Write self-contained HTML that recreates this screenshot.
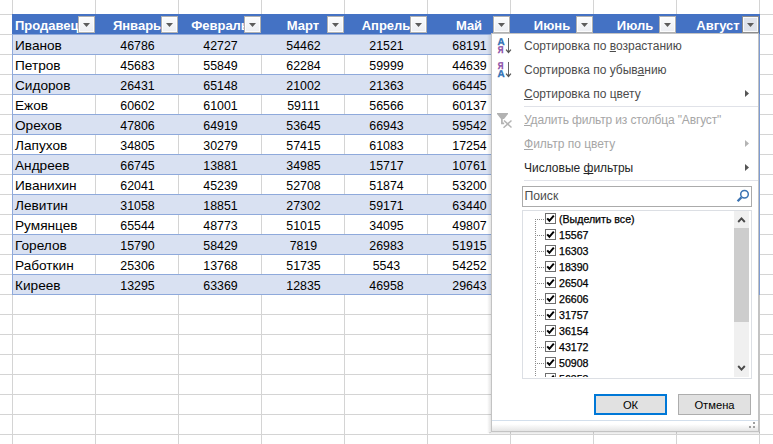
<!DOCTYPE html>
<html lang="ru"><head><meta charset="utf-8"><title>Фильтр</title>
<style>
html,body{margin:0;padding:0;background:#fff;}
body{width:773px;height:444px;overflow:hidden;font-family:"Liberation Sans",sans-serif;}
#sheet{position:relative;width:773px;height:444px;overflow:hidden;background:#fff;}
.vg{position:absolute;top:0;width:1px;height:444px;background:#d4d4d4;}
.hg{position:absolute;left:0;height:1px;width:773px;background:#d4d4d4;}
#tbl{position:absolute;left:12px;top:14px;width:748px;height:281px;font-size:13.3px;color:#000;}
.hdr{position:absolute;left:0;top:0;width:748px;height:21px;background:#4472c4;}
.hc{position:absolute;top:0;width:84px;height:21px;overflow:hidden;color:#fff;font-weight:bold;font-size:13px;text-align:center;white-space:nowrap;}
.hc span{position:absolute;left:-40px;right:-40px;top:0;line-height:24px;text-align:center;}
.hc.left span{left:3px;right:auto;text-align:left;}
.fb{position:absolute;left:66px;top:2px;width:15px;height:15px;border:1px solid #b1b1b1;background:linear-gradient(#fbfcfd,#eceef3);box-sizing:content-box;box-shadow:inset 0 0 0 1px rgba(255,255,255,.8);}
.fb svg{position:absolute;left:4px;top:6px;}
.fb.act{background:#dfe3eb;border-color:#8c8c8c;}
.row{position:absolute;left:0;width:748px;height:21px;box-sizing:border-box;border-top:1px solid #8ea9db;border-left:1px solid #8ea9db;border-right:1px solid #8ea9db;}
.row.band{background:#d9e1f2;}
.row:last-child{border-bottom:1px solid #8ea9db;}
.c{position:absolute;top:0;width:85px;height:20px;line-height:21px;font-size:13.15px;text-align:center;white-space:nowrap;margin-left:-1px;}
.c.num{transform:scaleX(0.94);transform-origin:50% 50%;}
.c.left{text-align:left;padding-left:3px;box-sizing:border-box;font-size:13.65px;}
/* popup */
#pop{position:absolute;left:491px;top:33px;width:266px;height:397px;border:1px solid #c3c3c3;background:#fff;font-size:12px;color:#4c4c4c;}
.mi{position:absolute;left:32px;white-space:nowrap;line-height:14px;margin-top:-1px;}
.mi.dis{color:#a6a6a6;}
.mi u{text-decoration:underline;text-underline-offset:1px;text-decoration-skip-ink:none;}
.sep{position:absolute;left:32px;right:0;height:1px;background:#e0e2e8;}
.arr{position:absolute;left:253px;width:4px;height:7px;background:#555;clip-path:polygon(0 0,100% 50%,0 100%);}
.arr.dis{background:#b4b4b4;}
#search{position:absolute;left:30px;top:152px;width:228px;height:19px;border:1px solid #ababab;background:#fff;}
#search span{position:absolute;left:1.5px;top:2px;line-height:14px;color:#4d4d4d;font-size:12.2px;}
#list{position:absolute;left:30px;top:176px;width:228px;height:167px;border:1px solid #dcdfe4;background:#fff;overflow:hidden;color:#000;}
.li{position:absolute;left:0;height:16px;width:210px;}
.li .cb{position:absolute;left:22px;top:2px;width:9px;height:9px;border:1px solid #6e6e6e;background:#fff;}
.li .cb svg{position:absolute;left:-1px;top:-1px;}
.li span{position:absolute;left:36px;top:1px;line-height:14px;white-space:nowrap;font-size:10.6px;}
#sb{position:absolute;left:211px;top:0;width:15px;height:166px;background:#f0f0f0;}
#thumb{position:absolute;left:0;top:17px;width:15px;height:94px;background:#cdcdcd;}
.btn{position:absolute;top:360px;width:71px;height:19px;border:1px solid #adadad;background:#e1e1e1;color:#000;text-align:center;line-height:21px;font-size:11.2px;}
.btn.def{border:2px solid #0078d7;width:69px;height:17px;line-height:19px;}
#grip{position:absolute;left:0;right:0;top:386px;height:10px;border-top:1px solid #d3dfec;background:linear-gradient(#fff 0,#fff 30%,#e5e5e5 100%);}

.tv{position:absolute;left:12px;top:8px;width:1px;height:158px;background:repeating-linear-gradient(to bottom,#8a8a8a 0,#8a8a8a 1px,transparent 1px,transparent 2px);}
.th{position:absolute;left:12px;width:10px;height:1px;background:repeating-linear-gradient(to right,#8a8a8a 0,#8a8a8a 1px,transparent 1px,transparent 2px);}

#rsh{position:absolute;left:759px;top:34px;width:1px;height:399px;background:linear-gradient(#7f9cd1 0,#7f9cd1 261px,#c4c4c4 261px);}
#lsh{position:absolute;left:487px;top:35px;width:4px;height:398px;background:linear-gradient(to left,rgba(0,0,0,.11),rgba(0,0,0,0));}
#bsh{position:absolute;left:489px;top:432px;width:271px;height:2px;background:linear-gradient(rgba(0,0,0,.11),rgba(0,0,0,.04));}

#list:after{content:"";position:absolute;left:0;right:0;bottom:0;height:1px;background:#fff;}
.li span{-webkit-text-stroke:0.25px #000;}

</style></head><body>
<div id="sheet">
<div class="vg" style="left:12px"></div><div class="vg" style="left:95px"></div><div class="vg" style="left:178px"></div><div class="vg" style="left:261px"></div><div class="vg" style="left:344px"></div><div class="vg" style="left:427px"></div><div class="vg" style="left:510px"></div><div class="vg" style="left:593px"></div><div class="vg" style="left:676px"></div><div class="vg" style="left:759px"></div><div class="hg" style="top:14px"></div><div class="hg" style="top:34px"></div><div class="hg" style="top:54px"></div><div class="hg" style="top:74px"></div><div class="hg" style="top:94px"></div><div class="hg" style="top:114px"></div><div class="hg" style="top:134px"></div><div class="hg" style="top:154px"></div><div class="hg" style="top:174px"></div><div class="hg" style="top:194px"></div><div class="hg" style="top:214px"></div><div class="hg" style="top:234px"></div><div class="hg" style="top:254px"></div><div class="hg" style="top:274px"></div><div class="hg" style="top:294px"></div><div class="hg" style="top:314px"></div><div class="hg" style="top:334px"></div><div class="hg" style="top:354px"></div><div class="hg" style="top:374px"></div><div class="hg" style="top:394px"></div><div class="hg" style="top:414px"></div><div class="hg" style="top:434px"></div>
<div id="tbl">
<div class="hdr"><div class="hc left" style="left:0px"><span>Продавец</span><i class="fb"><svg width="7" height="4" viewBox="0 0 7 4"><path d="M0 0H7L3.5 4Z" fill="#5c5c5c"/></svg></i></div><div class="hc" style="left:83px"><span>Январь</span><i class="fb"><svg width="7" height="4" viewBox="0 0 7 4"><path d="M0 0H7L3.5 4Z" fill="#5c5c5c"/></svg></i></div><div class="hc" style="left:166px"><span>Февраль</span><i class="fb"><svg width="7" height="4" viewBox="0 0 7 4"><path d="M0 0H7L3.5 4Z" fill="#5c5c5c"/></svg></i></div><div class="hc" style="left:249px"><span>Март</span><i class="fb"><svg width="7" height="4" viewBox="0 0 7 4"><path d="M0 0H7L3.5 4Z" fill="#5c5c5c"/></svg></i></div><div class="hc" style="left:332px"><span>Апрель</span><i class="fb"><svg width="7" height="4" viewBox="0 0 7 4"><path d="M0 0H7L3.5 4Z" fill="#5c5c5c"/></svg></i></div><div class="hc" style="left:415px"><span>Май</span><i class="fb"><svg width="7" height="4" viewBox="0 0 7 4"><path d="M0 0H7L3.5 4Z" fill="#5c5c5c"/></svg></i></div><div class="hc" style="left:498px"><span>Июнь</span><i class="fb"><svg width="7" height="4" viewBox="0 0 7 4"><path d="M0 0H7L3.5 4Z" fill="#5c5c5c"/></svg></i></div><div class="hc" style="left:581px"><span>Июль</span><i class="fb"><svg width="7" height="4" viewBox="0 0 7 4"><path d="M0 0H7L3.5 4Z" fill="#5c5c5c"/></svg></i></div><div class="hc" style="left:664px"><span>Август</span><i class="fb act"><svg width="7" height="4" viewBox="0 0 7 4"><path d="M0 0H7L3.5 4Z" fill="#5c5c5c"/></svg></i></div></div>
<div class="row band" style="top:20px"><div class="c left" style="left:0px">Иванов</div><div class="c num" style="left:83px">46786</div><div class="c num" style="left:166px">42727</div><div class="c num" style="left:249px">54462</div><div class="c num" style="left:332px">21521</div><div class="c num" style="left:415px">68191</div></div>
<div class="row" style="top:40px"><div class="c left" style="left:0px">Петров</div><div class="c num" style="left:83px">45683</div><div class="c num" style="left:166px">55849</div><div class="c num" style="left:249px">62284</div><div class="c num" style="left:332px">59999</div><div class="c num" style="left:415px">44639</div></div>
<div class="row band" style="top:60px"><div class="c left" style="left:0px">Сидоров</div><div class="c num" style="left:83px">26431</div><div class="c num" style="left:166px">65148</div><div class="c num" style="left:249px">21002</div><div class="c num" style="left:332px">21363</div><div class="c num" style="left:415px">66445</div></div>
<div class="row" style="top:80px"><div class="c left" style="left:0px">Ежов</div><div class="c num" style="left:83px">60602</div><div class="c num" style="left:166px">61001</div><div class="c num" style="left:249px">59111</div><div class="c num" style="left:332px">56566</div><div class="c num" style="left:415px">60137</div></div>
<div class="row band" style="top:100px"><div class="c left" style="left:0px">Орехов</div><div class="c num" style="left:83px">47806</div><div class="c num" style="left:166px">64919</div><div class="c num" style="left:249px">53645</div><div class="c num" style="left:332px">66943</div><div class="c num" style="left:415px">59542</div></div>
<div class="row" style="top:120px"><div class="c left" style="left:0px">Лапухов</div><div class="c num" style="left:83px">34805</div><div class="c num" style="left:166px">30279</div><div class="c num" style="left:249px">57415</div><div class="c num" style="left:332px">61083</div><div class="c num" style="left:415px">17254</div></div>
<div class="row band" style="top:140px"><div class="c left" style="left:0px">Андреев</div><div class="c num" style="left:83px">66745</div><div class="c num" style="left:166px">13881</div><div class="c num" style="left:249px">34985</div><div class="c num" style="left:332px">15717</div><div class="c num" style="left:415px">10761</div></div>
<div class="row" style="top:160px"><div class="c left" style="left:0px">Иванихин</div><div class="c num" style="left:83px">62041</div><div class="c num" style="left:166px">45239</div><div class="c num" style="left:249px">52708</div><div class="c num" style="left:332px">51874</div><div class="c num" style="left:415px">53200</div></div>
<div class="row band" style="top:180px"><div class="c left" style="left:0px">Левитин</div><div class="c num" style="left:83px">31058</div><div class="c num" style="left:166px">18851</div><div class="c num" style="left:249px">27302</div><div class="c num" style="left:332px">59171</div><div class="c num" style="left:415px">63440</div></div>
<div class="row" style="top:200px"><div class="c left" style="left:0px">Румянцев</div><div class="c num" style="left:83px">65544</div><div class="c num" style="left:166px">48773</div><div class="c num" style="left:249px">51015</div><div class="c num" style="left:332px">34095</div><div class="c num" style="left:415px">49807</div></div>
<div class="row band" style="top:220px"><div class="c left" style="left:0px">Горелов</div><div class="c num" style="left:83px">15790</div><div class="c num" style="left:166px">58429</div><div class="c num" style="left:249px">7819</div><div class="c num" style="left:332px">26983</div><div class="c num" style="left:415px">51915</div></div>
<div class="row" style="top:240px"><div class="c left" style="left:0px">Работкин</div><div class="c num" style="left:83px">25306</div><div class="c num" style="left:166px">13768</div><div class="c num" style="left:249px">51735</div><div class="c num" style="left:332px">5543</div><div class="c num" style="left:415px">54252</div></div>
<div class="row band" style="top:260px"><div class="c left" style="left:0px">Киреев</div><div class="c num" style="left:83px">13295</div><div class="c num" style="left:166px">63369</div><div class="c num" style="left:249px">12835</div><div class="c num" style="left:332px">46958</div><div class="c num" style="left:415px">29643</div></div>
</div>
<div id="pop">
<svg class="ico" style="position:absolute;left:4px;top:2px" width="20" height="20" viewBox="0 0 20 20"><text x="1.6" y="9" font-family="Liberation Sans, sans-serif" font-size="9.9" text-rendering="geometricPrecision" font-weight="bold" fill="#2f70b5" stroke="#2f70b5" stroke-width="0.3">А</text><text transform="translate(1.7,17) scale(0.8,1)" font-family="Liberation Sans, sans-serif" font-size="9.9" text-rendering="geometricPrecision" font-weight="bold" fill="#8b4ca6" stroke="#8b4ca6" stroke-width="0.3">Я</text><path d="M12.5 2 V16.5" fill="none" stroke="#666" stroke-width="1"/><path d="M10.1 13.6 L12.5 16.4 L14.9 13.6" fill="none" stroke="#555" stroke-width="1.3"/></svg>
<div class="mi" style="top:6px">Сортировка по <u>в</u>озрастанию</div>
<svg class="ico" style="position:absolute;left:4px;top:26px" width="20" height="20" viewBox="0 0 20 20"><text transform="translate(1.7,9) scale(0.8,1)" font-family="Liberation Sans, sans-serif" font-size="9.9" text-rendering="geometricPrecision" font-weight="bold" fill="#8b4ca6" stroke="#8b4ca6" stroke-width="0.3">Я</text><text x="1.6" y="17" font-family="Liberation Sans, sans-serif" font-size="9.9" text-rendering="geometricPrecision" font-weight="bold" fill="#2f70b5" stroke="#2f70b5" stroke-width="0.3">А</text><path d="M12.5 2 V16.5" fill="none" stroke="#666" stroke-width="1"/><path d="M10.1 13.6 L12.5 16.4 L14.9 13.6" fill="none" stroke="#555" stroke-width="1.3"/></svg>
<div class="mi" style="top:30px">Сортировка по убыв<u>а</u>нию</div>
<div class="mi" style="top:54px"><u>С</u>ортировка по цвету</div>
<div class="arr" style="top:56px"></div>
<div class="sep" style="top:72px"></div>
<svg class="ico" style="position:absolute;left:4px;top:77px" width="20" height="20" viewBox="0 0 20 20"><path d="M1 2 H12 V3 L8 8 H5 L1 3 Z" fill="#b2b2b2"/><path d="M5.9 8 V12.4 H8.2" fill="none" stroke="#b2b2b2" stroke-width="1.7"/><path d="M8 9.5 L15.5 16.5 M15.5 9.5 L7.5 16.8" stroke="#b4b4b4" stroke-width="1.5" fill="none"/></svg>
<div class="mi dis" style="top:80px;letter-spacing:-0.15px"><u>У</u>далить фильтр из столбца "Август"</div>
<div class="mi dis" style="top:104px"><u>Ф</u>ильтр по цвету</div>
<div class="arr dis" style="top:106px"></div>
<div class="mi" style="top:128px;color:#262626">Числовые <u>ф</u>ильтры</div>
<div class="arr" style="top:130px"></div>
<div class="sep" style="top:146px"></div>
<div id="search"><span>Поиск</span><svg style="position:absolute;right:0px;top:1px" width="16" height="16" viewBox="0 0 16 16"><circle cx="9.5" cy="6.3" r="3.8" fill="none" stroke="#3b73b2" stroke-width="1.5"/><path d="M6.4 9.4 L2.6 13.2" stroke="#3b73b2" stroke-width="2.3"/></svg></div>
<div id="list">
<div class="tv"></div>
<div class="th" style="top:8px"></div><div class="li" style="top:0px"><i class="cb"><svg viewBox="0 0 11 11" width="11" height="11"><path d="M2.2 5.4 L4.4 7.8 L8.8 2.6" fill="none" stroke="#000" stroke-width="2"/></svg></i><span>(Выделить все)</span></div>
<div class="th" style="top:24px"></div><div class="li" style="top:16px"><i class="cb"><svg viewBox="0 0 11 11" width="11" height="11"><path d="M2.2 5.4 L4.4 7.8 L8.8 2.6" fill="none" stroke="#000" stroke-width="2"/></svg></i><span>15567</span></div>
<div class="th" style="top:40px"></div><div class="li" style="top:32px"><i class="cb"><svg viewBox="0 0 11 11" width="11" height="11"><path d="M2.2 5.4 L4.4 7.8 L8.8 2.6" fill="none" stroke="#000" stroke-width="2"/></svg></i><span>16303</span></div>
<div class="th" style="top:56px"></div><div class="li" style="top:48px"><i class="cb"><svg viewBox="0 0 11 11" width="11" height="11"><path d="M2.2 5.4 L4.4 7.8 L8.8 2.6" fill="none" stroke="#000" stroke-width="2"/></svg></i><span>18390</span></div>
<div class="th" style="top:72px"></div><div class="li" style="top:64px"><i class="cb"><svg viewBox="0 0 11 11" width="11" height="11"><path d="M2.2 5.4 L4.4 7.8 L8.8 2.6" fill="none" stroke="#000" stroke-width="2"/></svg></i><span>26504</span></div>
<div class="th" style="top:88px"></div><div class="li" style="top:80px"><i class="cb"><svg viewBox="0 0 11 11" width="11" height="11"><path d="M2.2 5.4 L4.4 7.8 L8.8 2.6" fill="none" stroke="#000" stroke-width="2"/></svg></i><span>26606</span></div>
<div class="th" style="top:104px"></div><div class="li" style="top:96px"><i class="cb"><svg viewBox="0 0 11 11" width="11" height="11"><path d="M2.2 5.4 L4.4 7.8 L8.8 2.6" fill="none" stroke="#000" stroke-width="2"/></svg></i><span>31757</span></div>
<div class="th" style="top:120px"></div><div class="li" style="top:112px"><i class="cb"><svg viewBox="0 0 11 11" width="11" height="11"><path d="M2.2 5.4 L4.4 7.8 L8.8 2.6" fill="none" stroke="#000" stroke-width="2"/></svg></i><span>36154</span></div>
<div class="th" style="top:136px"></div><div class="li" style="top:128px"><i class="cb"><svg viewBox="0 0 11 11" width="11" height="11"><path d="M2.2 5.4 L4.4 7.8 L8.8 2.6" fill="none" stroke="#000" stroke-width="2"/></svg></i><span>43172</span></div>
<div class="th" style="top:152px"></div><div class="li" style="top:144px"><i class="cb"><svg viewBox="0 0 11 11" width="11" height="11"><path d="M2.2 5.4 L4.4 7.8 L8.8 2.6" fill="none" stroke="#000" stroke-width="2"/></svg></i><span>50908</span></div>
<div class="th" style="top:168px"></div><div class="li" style="top:160px"><i class="cb"><svg viewBox="0 0 11 11" width="11" height="11"><path d="M2.2 5.4 L4.4 7.8 L8.8 2.6" fill="none" stroke="#000" stroke-width="2"/></svg></i><span>56353</span></div>
<div id="sb"><div id="thumb"></div>
<svg style="position:absolute;left:3px;top:5px" width="9" height="7" viewBox="0 0 9 7"><path d="M1.2 6 L4.5 2.4 L7.8 6" fill="none" stroke="#4a4a4a" stroke-width="1.9"/></svg>
<svg style="position:absolute;left:3px;top:154px" width="9" height="7" viewBox="0 0 9 7"><path d="M1.2 1 L4.5 4.6 L7.8 1" fill="none" stroke="#4a4a4a" stroke-width="1.9"/></svg>
</div>
</div>
<div class="btn def" style="left:102px">ОК</div>
<div class="btn" style="left:186px">Отмена</div>
<div id="grip"><svg style="position:absolute;right:3px;top:1px" width="6" height="6" viewBox="0 0 6 6"><rect x="4" y="0" width="2" height="2" fill="#a0a0a0"/><rect x="4" y="4" width="2" height="2" fill="#a0a0a0"/><rect x="0" y="4" width="2" height="2" fill="#a0a0a0"/></svg></div>
</div>
<div id="rsh"></div><div id="lsh"></div><div id="bsh"></div>
</div>
</body></html>
